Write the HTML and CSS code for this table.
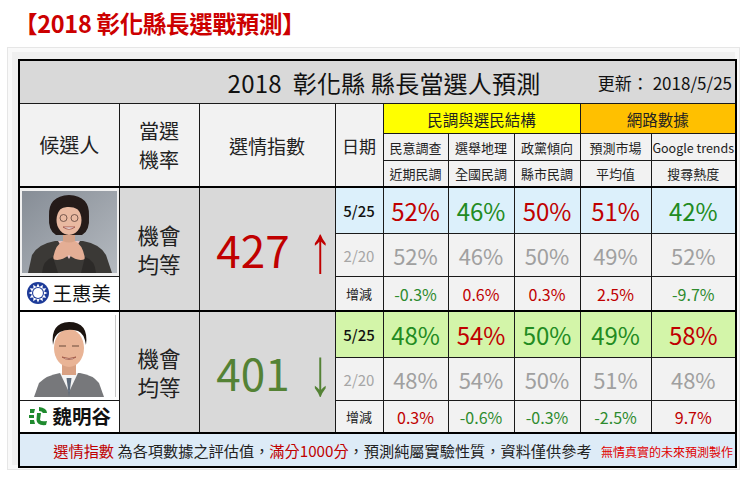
FILE: index.html
```html
<!DOCTYPE html>
<html lang="zh-Hant">
<head>
<meta charset="utf-8">
<title>2018 彰化縣長選戰預測</title>
<link rel="stylesheet" href="styles.css">
</head>
<body>
<h1 class="page-title">【2018 彰化縣長選戰預測】</h1>
<div class="panel">
<table class="poll">
<colgroup>
<col class="c-cand"><col class="c-rate"><col class="c-index"><col class="c-date">
<col class="c-a"><col class="c-b"><col class="c-c"><col class="c-d"><col class="c-e">
</colgroup>
<tr class="r-title">
<td colspan="9" class="title-cell">
<div class="title-bar"><span></span><span class="title-main">2018&nbsp; 彰化縣 縣長當選人預測</span><span class="update">更新：&nbsp;2018/5/25</span></div>
</td>
</tr>
<tr class="r-h1">
<th rowspan="3" class="h-big">候選人</th>
<th rowspan="3" class="h-big h-rate">當選<br>機率</th>
<th rowspan="3" class="h-mid">選情指數</th>
<th rowspan="3" class="h-date">日期</th>
<th colspan="3" class="h-poll">民調與選民結構</th>
<th colspan="2" class="h-net">網路數據</th>
</tr>
<tr class="r-h2">
<th class="h-sub">民意調查</th><th class="h-sub">選舉地理</th><th class="h-sub">政黨傾向</th><th class="h-sub">預測市場</th><th class="h-sub h-en">Google trends</th>
</tr>
<tr class="r-h3">
<th class="h-sub">近期民調</th><th class="h-sub">全國民調</th><th class="h-sub">縣市民調</th><th class="h-sub">平均值</th><th class="h-sub">搜尋熱度</th>
</tr>

<tr class="r-now blue">
<td rowspan="2" class="photo-cell">
<svg class="photo" viewBox="0 0 95 82" width="95" height="82">
<defs><linearGradient id="bg1" x1="0" y1="0" x2="1" y2="1"><stop offset="0" stop-color="#868d96"/><stop offset="1" stop-color="#b5bac0"/></linearGradient></defs>
<rect width="95" height="82" fill="url(#bg1)"/>
<path d="M6 82 L10 64 Q16 53 33 50 L61 50 Q78 53 84 64 L90 82 Z" fill="#3b3936"/>
<path d="M36 50 L47 68 L58 50 Z" fill="#e7c4c6"/>
<rect x="41" y="40" width="12" height="12" fill="#d6a287"/>
<path d="M27 25 Q26 5 47 4 Q68 5 67 25 Q68 40 60 44 L34 44 Q26 40 27 25 Z" fill="#251b19"/>
<ellipse cx="47" cy="29" rx="12.5" ry="15" fill="#e9b9a1"/>
<path d="M33 23 Q35 10 47 11 Q61 11 62 25 Q56 15 45 16 Q37 17 33 23 Z" fill="#251b19"/>
<circle cx="41.5" cy="27" r="3.5" fill="none" stroke="#5a4038" stroke-width="0.8"/>
<circle cx="52.5" cy="27" r="3.5" fill="none" stroke="#5a4038" stroke-width="0.8"/>
<path d="M41 36 Q47 40.5 53 36 Z" fill="#fff" stroke="#a0524a" stroke-width="0.9"/>
<path d="M31 68 Q33 54 41 50 Q47 53 53 50 Q61 54 63 68 Q56 71 47 64 Q38 71 31 68 Z" fill="#e4ae95"/>
<path d="M20 82 Q21 69 31 66 L36 82 Z" fill="#2c2a28"/>
<path d="M59 82 L63 66 Q73 69 74 82 Z" fill="#2c2a28"/>
</svg>
</td>
<td rowspan="3" class="chance">機會<br>均等</td>
<td rowspan="3" class="index up">427<span class="arrow">↑</span></td>
<td class="date now">5/25</td>
<td class="pct red">52%</td><td class="pct green">46%</td><td class="pct red">50%</td><td class="pct red">51%</td><td class="pct green">42%</td>
</tr>
<tr class="r-prev">
<td class="date prev">2/20</td>
<td class="pct-prev">52%</td><td class="pct-prev">46%</td><td class="pct-prev">50%</td><td class="pct-prev">49%</td><td class="pct-prev">52%</td>
</tr>
<tr class="r-diff">
<td class="name-cell"><span class="name"><svg class="logo" viewBox="0 0 22 22" width="22" height="22">
<circle cx="11" cy="11" r="11" fill="#1c3a98"/>
<polygon fill="#fff" points="11,1.5 12.6,5 15.8,2.8 15.5,6.6 19.2,6.3 17,9.4 20.5,11 17,12.6 19.2,15.7 15.5,15.4 15.8,19.2 12.6,17 11,20.5 9.4,17 6.2,19.2 6.5,15.4 2.8,15.7 5,12.6 1.5,11 5,9.4 2.8,6.3 6.5,6.6 6.2,2.8 9.4,5"/>
<circle cx="11" cy="11" r="6" fill="#1c3a98"/>
<circle cx="11" cy="11" r="4.9" fill="#fff"/>
</svg>王惠美</span></td>
<td class="date diff">增減</td>
<td class="delta green">-0.3%</td><td class="delta red">0.6%</td><td class="delta red">0.3%</td><td class="delta red">2.5%</td><td class="delta green">-9.7%</td>
</tr>

<tr class="r-now lime">
<td rowspan="2" class="photo-cell photo-cell-2">
<svg class="photo" viewBox="0 0 95 82" width="95" height="82">
<rect width="95" height="82" fill="#ffffff"/>
<rect x="93" y="0" width="1" height="82" fill="#c8c8c8"/>
<path d="M12 82 L17 68 Q25 60 38 58 L58 58 Q71 60 77 68 L82 82 Z" fill="#77787b"/>
<path d="M38 58 L47 77 L56 58 Z" fill="#f4f4f4"/>
<path d="M44.5 63 L47 82 L49.5 63 Z" fill="#5d6a7a"/>
<rect x="40" y="46" width="14" height="14" fill="#d9a183"/>
<ellipse cx="47" cy="33" rx="15" ry="19" fill="#e9b496"/>
<path d="M31 30 Q28 8 47 7 Q67 7 64 30 Q62 18 56 16 Q46 13 38 17 Q32 20 31 30 Z" fill="#1c1410"/>
<path d="M37 31 h7 M50 31 h7" stroke="#6a4a3a" stroke-width="1.2"/>
<path d="M40 42 Q47 47 54 42 Q47 45 40 42 Z" fill="#fff" stroke="#9a5040" stroke-width="0.8"/>
</svg>
</td>
<td rowspan="3" class="chance">機會<br>均等</td>
<td rowspan="3" class="index down">401<span class="arrow">↓</span></td>
<td class="date now">5/25</td>
<td class="pct green">48%</td><td class="pct red">54%</td><td class="pct green">50%</td><td class="pct green">49%</td><td class="pct red">58%</td>
</tr>
<tr class="r-prev">
<td class="date prev">2/20</td>
<td class="pct-prev">48%</td><td class="pct-prev">54%</td><td class="pct-prev">50%</td><td class="pct-prev">51%</td><td class="pct-prev">48%</td>
</tr>
<tr class="r-diff last">
<td class="name-cell"><span class="name name-bold"><svg class="logo" viewBox="0 0 22 22" width="22" height="22">
<path d="M3 4 L8 4 L7 8 L3 8 Z" fill="#1f8a2e"/>
<path d="M2 10 L7 10 L7 13 L2 13 Z" fill="#1f8a2e"/>
<path d="M3 15 L7 15 L8 19 L3 19 Z" fill="#1f8a2e"/>
<path d="M12 2 Q20 3 20 8 L16 8 Q15 6 12 6 Z" fill="#1f8a2e"/>
<path d="M10 8 L14 8 L13 15 Q14 17 20 16 L19 20 Q10 21 9.5 15 Z" fill="#1f8a2e"/>
</svg>魏明谷</span></td>
<td class="date diff">增減</td>
<td class="delta red">0.3%</td><td class="delta green">-0.6%</td><td class="delta green">-0.3%</td><td class="delta green">-2.5%</td><td class="delta red">9.7%</td>
</tr>

<tr class="r-foot">
<td colspan="9" class="foot"><span class="hl">選情指數</span> 為各項數據之評估值，<span class="hl">滿分1000分</span>，預測純屬實驗性質，資料僅供參考 <span class="credit">無情真實的未來預測製作</span></td>
</tr>
</table>
</div>
</body>
</html>
```
FILE: styles.css
```css
html, body {
  margin: 0;
  padding: 0;
  background: #ffffff;
}
body {
  font-family: "Noto Sans CJK TC", "Noto Sans CJK SC", sans-serif;
  color: #111;
  width: 743px;
}
.page-title {
  margin: 0;
  padding: 8px 0 0 14px;
  height: 30px;
  line-height: 30px;
  font-size: 23.5px;
  font-weight: 700;
  color: #cc0000;
  letter-spacing: -0.3px;
}
.panel {
  margin: 9px 0 0 7px;
  border: 1px solid #e6e6e6;
  background: #f0f0f0;
  box-shadow: inset 0 0 0 4px #f9f9f9;
  padding: 11px 0 0 10px;
  box-sizing: border-box;
  width: 733px;
  height: 423px;
}
.poll {
  border-collapse: collapse;
  table-layout: fixed;
  width: 717px;
  border: 2px solid #000;
}
.c-cand { width: 100px; }
.c-rate { width: 80px; }
.c-index { width: 136px; }
.c-date { width: 48px; }
.c-a { width: 65px; }
.c-b { width: 66px; }
.c-c { width: 66px; }
.c-d { width: 71px; }
.c-e { width: 85px; }
.poll th, .poll td {
  border: 1px solid #1a1a1a;
  padding: 0;
  text-align: center;
  vertical-align: middle;
  font-weight: 400;
  white-space: nowrap;
  overflow: hidden;
}
.r-title td { height: 42px; background: #d9d9d9; }
.title-bar {
  display: grid;
  grid-template-columns: 1fr auto 1fr;
  align-items: center;
  padding-left: 13px;
}
.title-main {
  font-size: 24px;
  color: #111;
  letter-spacing: 0.2px;
}
.update {
  justify-self: end;
  padding-right: 3px;
  font-size: 17px;
  color: #111;
}
.r-h1 th { height: 29px; background: #f2f2f2; }
.r-h2 th { height: 26px; background: #f2f2f2; }
.r-h3 th { height: 25px; background: #f2f2f2; }
.r-h1 th[rowspan] { border-bottom: 2px solid #000; }
.r-h3 th { border-bottom: 2px solid #000; }
.h-big { font-size: 20px; line-height: 28px; color: #222; }
.h-rate { line-height: 29px; }
.h-mid { font-size: 19px; color: #222; }
.h-date { font-size: 17px; color: #222; }
.h-poll { background: #ffff00 !important; font-size: 15.5px; color: #222; }
.h-net { background: #ffc000 !important; font-size: 15.5px; color: #222; }
.h-sub { font-size: 13px; color: #222; }
.h-en { font-size: 12.5px; }

.r-now td { height: 45px; }
.r-prev td { height: 42px; }
.r-diff td { height: 33px; }
.r-diff.last td { height: 31px; }
.blue td.date, .blue td.pct { background: #dcf0fb; }
.lime td.date, .lime td.pct { background: #d3f5a9; }
.r-prev td, .r-diff td { background: #f2f2f2; }
.r-diff td { border-bottom: 2px solid #000; }

.photo-cell { background: #f0f0f0 !important; }
.photo-cell-2 { background: #ffffff !important; }
.photo { display: block; margin: 0 auto; }
.name-cell { background: #ffffff !important; }
.name {
  display: inline-flex;
  align-items: center;
  gap: 3px;
  font-size: 19.5px;
  color: #111;
}
.name-bold { font-weight: 700; }
.logo { display: block; }

.chance {
  background: #d9d9d9 !important;
  font-size: 21.5px;
  line-height: 29px;
  color: #222;
  border-bottom: 2px solid #000 !important;
}
.index {
  background: #d9d9d9 !important;
  font-size: 44px;
  font-weight: 300;
  padding-left: 14px !important;
  border-bottom: 2px solid #000 !important;
}
.arrow {
  display: inline-block;
  font-family: "Liberation Sans", "DejaVu Sans", sans-serif;
  font-weight: 400;
  font-size: 46px;
  margin-left: 19px;
  transform: translateY(-3px) scaleY(1.45);
  transform-origin: 50% 50%;
}
.index.up { color: #c00000; }
.index.down { color: #548235; }

.date.now { font-size: 15px; font-weight: 500; color: #111; }
.date.prev { font-size: 15px; color: #a6a6a6; }
.date.diff { font-size: 13px; color: #222; }
.pct { font-size: 24px; font-weight: 700; }
.pct-prev { font-size: 22px; color: #a0a0a0; }
.delta { font-size: 16px; }
.red { color: #c00000; }
.green { color: #228b22; }
.delta.green { color: #2e8b2e; }

.r-foot td {
  height: 32px;
  background: #ddebf7;
  text-align: right;
  padding-right: 2px;
  font-size: 15.2px;
  color: #222;
}
.foot .hl { color: #c00000; }
.foot .credit { font-size: 12px; color: #e00000; margin-left: 6px; }
```
